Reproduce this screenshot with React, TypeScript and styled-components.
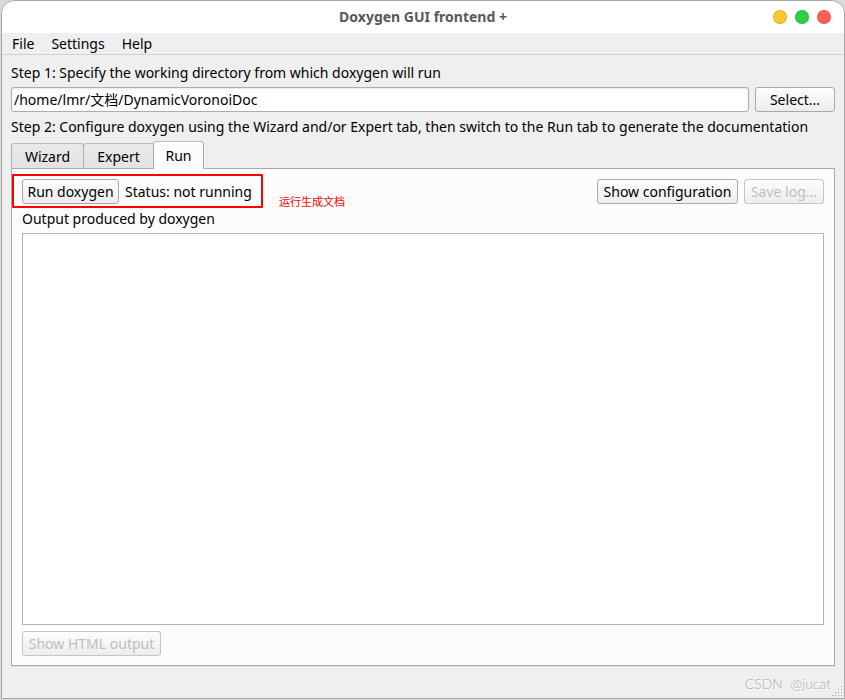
import React, { useState } from "react";
import styled, { createGlobalStyle } from "styled-components";

const GlobalStyle = createGlobalStyle`
  *, *::before, *::after { box-sizing: border-box; }
  body {
    margin: 0;
    background: #d9d9d9;
    color: #000;
    font-family: "Noto Sans", "Noto Sans CJK SC", sans-serif;
    font-size: 14px;
    line-height: 20px;
  }
  button, input, textarea { font: inherit; color: inherit; }
`;

const Desktop = styled.div`
  display: flex;
  min-height: 100vh;
  padding: 0 0 1px 1px;
`;

const Window = styled.main`
  position: relative;
  flex: 1;
  min-width: 0;
  display: flex;
  flex-direction: column;
  background: #efefef;
  border: 1px solid #a8a8a8;
  border-radius: 14px 14px 0 0;
  overflow: hidden;
`;

const TitleBar = styled.header`
  display: grid;
  grid-template-columns: 1fr auto 1fr;
  align-items: center;
  height: 32px;
  padding: 0 13px;
  background: #fff;
`;

const Title = styled.h1`
  grid-column: 2;
  margin: 0;
  font-size: 14px;
  font-weight: 700;
  color: #58585a;
`;

const WindowControls = styled.div`
  display: flex;
  justify-content: flex-end;
  gap: 8px;
`;

const WindowControl = styled.button<{ $color: string }>`
  width: 14px;
  height: 14px;
  padding: 0;
  border: 1px solid rgba(0, 0, 0, 0.12);
  border-radius: 50%;
  background: ${(p) => p.$color};
`;

const MenuBar = styled.nav`
  display: flex;
  gap: 17px;
  height: 22px;
  padding: 0 10px;
  border-bottom: 1px solid #d3d3d3;
`;

const MenuItem = styled.button`
  padding: 0;
  border: 0;
  background: none;
  line-height: 20px;
`;

const Body = styled.div`
  flex: 1;
  display: flex;
  flex-direction: column;
  padding: 8px 9px 32px;
`;

const StepLabel = styled.label`
  white-space: nowrap;
`;

const StepText = styled.p`
  margin: 0;
  white-space: nowrap;
`;

const PathRow = styled.div`
  display: flex;
  gap: 6px;
  padding: 4px 0 5px;
`;

const PathInput = styled.input`
  flex: 1;
  min-width: 0;
  height: 25px;
  padding: 0 2px 2px;
  border: 1px solid #adadad;
  border-radius: 3px;
  background: #fff;
  box-shadow: inset 0 1px 0 #ededed;
  outline: none;
`;

const Button = styled.button<{ $width: number }>`
  min-width: ${(p) => p.$width}px;
  height: 25px;
  padding: 0;
  border: 1px solid #a9a9a9;
  border-radius: 3px;
  background: linear-gradient(#fdfdfd, #ededed);
  line-height: 20px;
  white-space: nowrap;
  &:disabled {
    border-color: #c4c4c4;
    color: #bebebe;
  }
`;

const TabList = styled.div`
  display: flex;
  align-items: flex-end;
  height: 28px;
  margin: 4px 0 -1px;
  z-index: 1;
`;

const Tab = styled.button<{ $width: number }>`
  min-width: ${(p) => p.$width}px;
  height: 26px;
  margin-right: -1px;
  padding: 2px 0 0;
  border: 1px solid #adadad;
  border-top-color: #bdbdbd;
  border-radius: 3px 3px 0 0;
  background: linear-gradient(#e9e9e9, #e3e3e3);
  &[aria-selected="true"] {
    z-index: 1;
    height: 28px;
    padding: 0;
    border-bottom: 0;
    background: #fcfcfc;
  }
`;

const Panel = styled.section`
  flex: 1;
  display: flex;
  flex-direction: column;
  padding: 10px 10px 9px;
  border: 1px solid #a9a9a9;
  background: #fcfcfc;
  box-shadow: 0 1px 0 #dedede;
`;

const RunRow = styled.div`
  display: flex;
  justify-content: space-between;
`;

const ButtonGroup = styled.div`
  display: flex;
  gap: 6px;
`;

const HighlightedGroup = styled(ButtonGroup)`
  position: relative;
  align-items: center;
  &::after {
    content: "";
    position: absolute;
    inset: -5px -9px -4px -10px;
    border: 2px solid #f00;
    border-radius: 1px;
    pointer-events: none;
  }
`;

const Status = styled.output`
  min-width: 129px;
  white-space: nowrap;
`;

const Note = styled.span`
  position: absolute;
  left: calc(100% + 25px);
  top: 12px;
  color: #f00;
  font-family: "Noto Sans CJK SC", sans-serif;
  font-size: 11px;
  white-space: nowrap;
`;

const OutputLabel = styled.label`
  padding: 5px 0 4px;
`;

const OutputLog = styled.textarea`
  flex: 1;
  width: 100%;
  min-height: 120px;
  margin: 0 0 6px;
  padding: 2px;
  border: 1px solid #b4b4b4;
  background: #fff;
  resize: none;
  outline: none;
`;

const Watermark = styled.span`
  position: absolute;
  right: 13px;
  bottom: 4px;
  color: #a8a8a8;
  font-family: Lato, sans-serif;
  font-weight: 300;
  font-size: 14px;
  text-shadow: 1px 1px 0 #fff;
  white-space: pre;
`;

const SizeGrip = styled.svg`
  position: absolute;
  right: 1px;
  bottom: 1px;
`;

const gripDots = [[10, 0], [7, 3], [10, 3], [4, 6], [7, 6], [10, 6], [1, 9], [4, 9], [7, 9], [10, 9]];

const tabs = [
  { name: "Wizard", width: 73 },
  { name: "Expert", width: 71 },
  { name: "Run", width: 51 },
];

export default function App() {
  const [path, setPath] = useState("/home/lmr/文档/DynamicVoronoiDoc");
  const [active, setActive] = useState("Run");

  return (
    <>
      <GlobalStyle />
      <Desktop>
        <Window>
          <TitleBar>
            <Title>Doxygen GUI frontend +</Title>
            <WindowControls>
              <WindowControl $color="#fdc92d" aria-label="Minimize" />
              <WindowControl $color="#29d244" aria-label="Maximize" />
              <WindowControl $color="#fe6054" aria-label="Close" />
            </WindowControls>
          </TitleBar>
          <MenuBar>
            <MenuItem>File</MenuItem>
            <MenuItem>Settings</MenuItem>
            <MenuItem>Help</MenuItem>
          </MenuBar>
          <Body>
            <StepLabel htmlFor="path">
              Step 1: Specify the working directory from which doxygen will run
            </StepLabel>
            <PathRow>
              <PathInput id="path" value={path} onChange={(e) => setPath(e.target.value)} />
              <Button $width={80}>Select...</Button>
            </PathRow>
            <StepText>
              Step 2: Configure doxygen using the Wizard and/or Expert tab, then switch to the Run tab to generate the documentation
            </StepText>
            <TabList role="tablist">
              {tabs.map((t) => (
                <Tab
                  key={t.name}
                  role="tab"
                  $width={t.width}
                  aria-selected={active === t.name}
                  onClick={() => setActive(t.name)}
                >
                  {t.name}
                </Tab>
              ))}
            </TabList>
            <Panel role="tabpanel">
              <RunRow>
                <HighlightedGroup>
                  <Button $width={97}>Run doxygen</Button>
                  <Status>Status: not running</Status>
                  <Note>运行生成文档</Note>
                </HighlightedGroup>
                <ButtonGroup>
                  <Button $width={141}>Show configuration</Button>
                  <Button $width={80} disabled>Save log...</Button>
                </ButtonGroup>
              </RunRow>
              <OutputLabel htmlFor="log">Output produced by doxygen</OutputLabel>
              <OutputLog id="log" readOnly />
              <div>
                <Button $width={139} disabled>Show HTML output</Button>
              </div>
            </Panel>
          </Body>
          <Watermark>CSDN  @jucat</Watermark>
          <SizeGrip width="12" height="11" aria-hidden="true">
            {gripDots.map(([x, y]) => (
              <rect key={`${x}-${y}`} x={x} y={y} width="1" height="1" fill="#a0a0a0" />
            ))}
          </SizeGrip>
        </Window>
      </Desktop>
    </>
  );
}
